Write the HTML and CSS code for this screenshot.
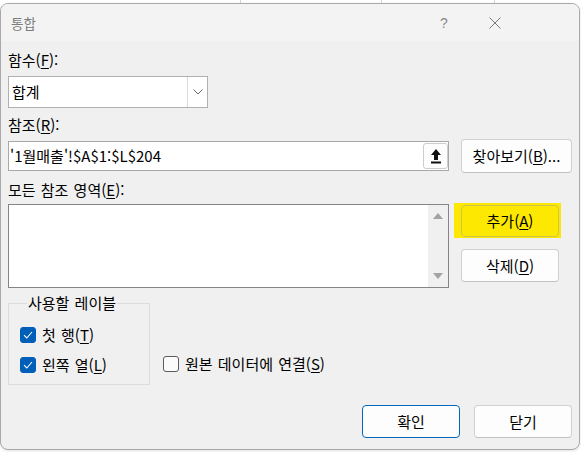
FILE: index.html
```html
<!DOCTYPE html>
<html lang="ko">
<head>
<meta charset="utf-8">
<title>통합</title>
<link rel="stylesheet" href="styles.css">
</head>
<body>
<div class="topstrip"></div>
<div class="dialog">
  <div class="titlebar">
    <span class="title">통합</span>
    <span class="help">?</span>
    <span class="close">
      <svg width="12" height="12" viewBox="0 0 12 12"><path d="M0.5 0.5 L11.5 11.5 M11.5 0.5 L0.5 11.5" stroke="#7a7a7a" stroke-width="1" fill="none"/></svg>
    </span>
  </div>
  <div class="content">
    <div class="label l1">함수(<u>F</u>):</div>
    <div class="combo">
      <span class="combo-text">합계</span>
      <span class="combo-arrow">
        <svg width="10" height="6" viewBox="0 0 10 6"><path d="M0.5 0.5 L5 5 L9.5 0.5" stroke="#6a6a6a" stroke-width="1" fill="none"/></svg>
      </span>
    </div>
    <div class="label l2">참조(<u>R</u>):</div>
    <div class="row-ref">
      <div class="refbox">
        <span class="ref-text">'1월매출'!$A$1:$L$204</span>
        <span class="collapse">
          <svg width="12" height="16" viewBox="0 0 12 16"><path d="M6 1 L11 7 L8 7 L8 12 L4 12 L4 7 L1 7 Z" fill="#111"/><rect x="1" y="13.5" width="10" height="2" fill="#111"/></svg>
        </span>
      </div>
      <button class="btn browse">찾아보기(<u>B</u>)...</button>
    </div>
    <div class="label l3">모든 참조 영역(<u>E</u>):</div>
    <div class="row-list">
      <div class="listbox">
        <div class="list-area"></div>
        <div class="scrollbar">
          <svg width="10" height="6" viewBox="0 0 10 6"><path d="M0 6 L5 0 L10 6 Z" fill="#a3a3a3"/></svg>
          <svg width="10" height="6" viewBox="0 0 10 6"><path d="M0 0 L5 6 L10 0 Z" fill="#a3a3a3"/></svg>
        </div>
      </div>
      <div class="list-buttons">
        <div class="highlight"><button class="btn add">추가(<u>A</u>)</button></div>
        <button class="btn del">삭제(<u>D</u>)</button>
      </div>
    </div>
    <div class="row-labels">
      <fieldset class="group">
        <legend>사용할 레이블</legend>
        <div class="check-row">
          <span class="cb checked"><svg width="10" height="8" viewBox="0 0 10 8"><path d="M1 4.2 L3.8 7 L9 1" stroke="#fff" stroke-width="1.1" fill="none"/></svg></span>
          <span>첫 행(<u>T</u>)</span>
        </div>
        <div class="check-row second">
          <span class="cb checked"><svg width="10" height="8" viewBox="0 0 10 8"><path d="M1 4.2 L3.8 7 L9 1" stroke="#fff" stroke-width="1.1" fill="none"/></svg></span>
          <span>왼쪽 열(<u>L</u>)</span>
        </div>
      </fieldset>
      <div class="check-row link">
        <span class="cb"></span>
        <span>원본 데이터에 연결(<u>S</u>)</span>
      </div>
    </div>
    <div class="row-footer">
      <button class="btn ok">확인</button>
      <button class="btn cancel">닫기</button>
    </div>
  </div>
</div>
</body>
</html>
```

FILE: styles.css
```css
html, body {
  margin: 0;
  padding: 0;
}
body {
  width: 581px;
  height: 452px;
  overflow: hidden;
  background: #ffffff;
  font-family: "Noto Sans CJK KR", "Noto Sans", sans-serif;
  font-size: 15px;
  word-spacing: 1px;
  color: #000;
}
.topstrip {
  height: 3px;
  background:
    linear-gradient(#d6d6d6, #d6d6d6) 240px 0 / 1px 100% no-repeat,
    linear-gradient(#d6d6d6, #d6d6d6) 381px 0 / 1px 100% no-repeat,
    linear-gradient(#d6d6d6, #d6d6d6) 494px 0 / 1px 100% no-repeat,
    #ffffff;
}
.dialog {
  box-sizing: border-box;
  width: 580px;
  height: 447px;
  border: 1px solid #a9a9a9;
  border-radius: 8px;
  background: #f0f0f0;
  overflow: hidden;
  box-shadow: 0 1px 3px rgba(0,0,0,0.12);
}
.titlebar {
  height: 37px;
  background: #f3f3f3;
  display: flex;
  align-items: center;
}
.title {
  padding-left: 10px;
  font-size: 13.5px;
  color: #7c7c7c;
  line-height: 20px;
}
.help {
  margin-left: auto;
  width: 28px;
  text-align: center;
  font-family: "Liberation Sans", sans-serif;
  font-size: 14px;
  color: #8a8a8a;
  line-height: 20px;
}
.close {
  width: 28px;
  margin-left: 23px;
  margin-right: 70px;
  display: flex;
  justify-content: center;
  align-items: center;
}
.content {
  padding-left: 7px;
}
.label {
  line-height: 20px;
  height: 20px;
  white-space: nowrap;
}
.l1 { margin-top: 9px; }
.l2 { margin-top: 7px; }
.l3 { margin-top: 7px; }
.combo {
  box-sizing: border-box;
  margin-top: 6px;
  width: 200px;
  height: 32px;
  border: 1px solid #b0b0b0;
  background: #fff;
  display: flex;
  align-items: center;
}
.combo-text {
  flex: 1;
  padding-left: 3px;
  line-height: 20px;
}
.combo-arrow {
  box-sizing: border-box;
  width: 20px;
  height: 30px;
  border-left: 1px solid #dadada;
  display: flex;
  align-items: center;
  justify-content: center;
}
.row-ref {
  margin-top: 4px;
  height: 34px;
  display: flex;
  align-items: center;
}
.refbox {
  box-sizing: border-box;
  width: 441px;
  height: 30px;
  border: 1px solid #a8a8a8;
  background: #fff;
  display: flex;
  align-items: center;
}
.ref-text {
  flex: 1;
  padding-left: 1px;
  line-height: 20px;
  white-space: nowrap;
}
.collapse {
  box-sizing: border-box;
  width: 25px;
  height: 26px;
  border: 1px solid #cdcdcd;
  border-radius: 3px;
  background: #fdfdfd;
  display: flex;
  align-items: center;
  justify-content: center;
}
.btn {
  box-sizing: border-box;
  font-family: inherit;
  font-size: 15px;
  word-spacing: 1px;
  color: #000;
  background: #fdfdfd;
  border: 1px solid #d0d0d0;
  border-bottom-color: #c2c2c2;
  border-radius: 4px;
  padding: 0;
  line-height: 20px;
  white-space: nowrap;
}
.browse {
  margin-left: 12px;
  width: 111px;
  height: 34px;
}
.row-list {
  margin-top: 3px;
  display: flex;
  align-items: flex-start;
}
.listbox {
  box-sizing: border-box;
  margin-top: 1px;
  width: 441px;
  height: 84px;
  border: 1px solid #858585;
  background: #fff;
  display: flex;
}
.list-area {
  flex: 1;
}
.scrollbar {
  width: 20px;
  background: #f0f0f0;
  display: flex;
  flex-direction: column;
  align-items: center;
  justify-content: space-between;
  padding: 8px 0 8px;
}
.list-buttons {
  margin-left: 5px;
  display: flex;
  flex-direction: column;
  align-items: flex-start;
}
.highlight {
  background: #fce800;
  padding: 2px 2px 1px 7px;
}
.add {
  width: 98px;
  height: 32px;
  background: #fce800;
  border: 1px solid #cfc54c;
}
.del {
  margin-top: 11px;
  margin-left: 7px;
  width: 98px;
  height: 33px;
}
.row-labels {
  margin-top: 5px;
  display: flex;
  align-items: flex-end;
}
.group {
  box-sizing: border-box;
  width: 142px;
  margin: 0;
  border: 1px solid #dcdcdc;
  padding: 12px 0 9px 11px;
}
.group legend {
  padding: 0 1px;
  margin-left: 7px;
  line-height: 20px;
  white-space: nowrap;
}
.check-row {
  display: flex;
  align-items: center;
  height: 20px;
  line-height: 20px;
  white-space: nowrap;
}
.check-row.second {
  margin-top: 10px;
}
.check-row.link {
  margin-left: 13px;
  margin-bottom: 11px;
}
.cb {
  box-sizing: border-box;
  width: 16px;
  height: 16px;
  margin-right: 6px;
  border: 1px solid #5c5c5c;
  border-radius: 3px;
  background: #fbfbfb;
  display: flex;
  align-items: center;
  justify-content: center;
}
.cb.checked {
  background: #005fb8;
  border-color: #005fb8;
}
.row-footer {
  margin-top: 20px;
  padding-right: 7px;
  display: flex;
  justify-content: flex-end;
  gap: 14px;
}
.ok, .cancel {
  width: 98px;
  height: 33px;
}
.ok {
  border: 1px solid #0067c0;
}
u {
  text-decoration: underline;
  text-underline-offset: 2px;
}
```
